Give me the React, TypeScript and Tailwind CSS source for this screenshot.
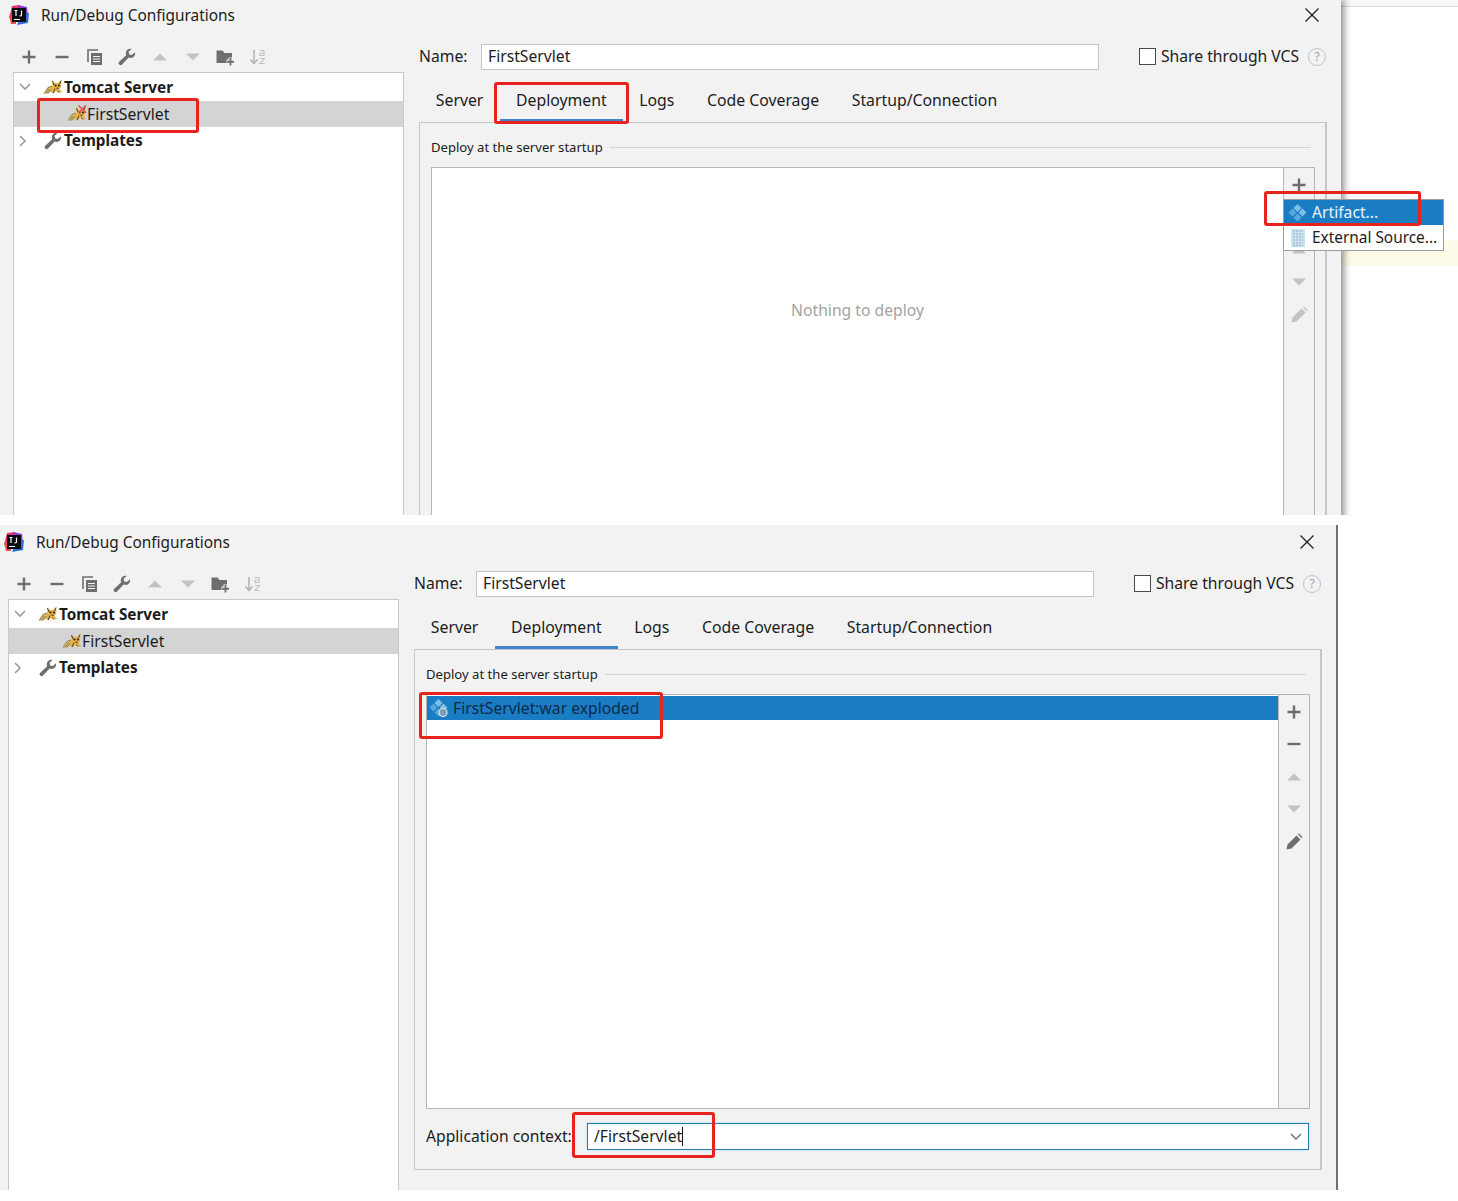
import React from 'react';

const font = { fontFamily: '"Noto Sans", "Open Sans", Arial, sans-serif' };

const IdeaLogo = () => (
  <svg width="22" height="22" viewBox="0 0 22 22">
    <path d="M4 2 L12 1 L10 10 L1 14 Z" fill="#e8316e" />
    <path d="M10 1 L19 3 L20 12 L12 10 Z" fill="#8a3fd0" />
    <path d="M1 12 L7 8 L8 20 L3 20 Z" fill="#ef4b4b" />
    <path d="M14 10 L21 9 L20 19 L9 21 Z" fill="#2e6fe0" />
    <rect x="4" y="4" width="14" height="14" fill="#0b0b12" />
    <rect x="6" y="15" width="6" height="1" fill="#ffffff" />
    <path d="M6.500 6.500h3M8 6.500v5.500M13.500 6.500v4.500q0 1-2 1" stroke="#ffffff" strokeWidth="1.200" fill="none" />
  </svg>
);

const TomcatIcon = ({ broken }: { broken?: boolean }) => (
  <svg width="20" height="18" viewBox="0 0 20 18" className="shrink-0">
    <path d="M1 15.500 L5 9.500 L9.500 7.500 L9 2.500 L12 5 L15 5 L18.500 2 L18 9 L16.500 11 L19.500 14 L15.500 14.500 L13.500 12.500 L10.500 15.500 L7.500 13.500 L5 15.500 Z" fill="#e3b34c" />
    <path d="M1 15.500 L5 9.500 L9 8 M3 15.500 L6.500 11 M5 15.500 L8 11.500" stroke="#85806c" strokeWidth="1" fill="none" />
    <path d="M9.500 3 L11 7 M18 2.500 L16.500 6 M10 15 L12 10.500 M14 12.500 L16 14.500" stroke="#57431c" strokeWidth="1" fill="none" />
    <circle cx="12.500" cy="7.500" r="1.100" fill="#2f2410" />
    <circle cx="16" cy="7.500" r="1.100" fill="#2f2410" />
    <path d="M13.500 10.200h2" stroke="#2f2410" strokeWidth="1" />
    {broken && <path d="M11.500 0.500 L19 8 M19 0.500 L11.500 8" stroke="#e2505a" strokeWidth="1.700" />}
  </svg>
);

const WrenchIcon = ({ size = 18 }: { size?: number }) => (
  <svg width={size} height={size} viewBox="0 0 18 18" className="shrink-0">
    <path d="M17 4.200 L13.800 7 L11.200 6.400 L10.600 3.800 L13.600 1 C11 0.200 7.800 1.800 7.800 5.200 C7.800 6 8 6.700 8.200 7.200 L1.200 13.800 C0.300 14.800 0.400 15.700 1.200 16.600 C2.200 17.500 3.200 17.400 4 16.600 L10.700 9.600 C11.400 9.900 12 10 12.700 10 C15.900 9.800 17.600 7 17 4.200 Z" fill="#6e6e6e" />
  </svg>
);

const PlusIcon = ({ color = '#6e6e6e' }: { color?: string }) => (
  <svg width="14" height="14" viewBox="0 0 14 14"><path d="M7 0.500v13M0.500 7h13" stroke={color} strokeWidth="2.400" /></svg>
);
const MinusIcon = ({ color = '#6e6e6e' }: { color?: string }) => (
  <svg width="14" height="14" viewBox="0 0 14 14"><path d="M0.500 7h13" stroke={color} strokeWidth="2.400" /></svg>
);
const UpIcon = () => (
  <svg width="14" height="8" viewBox="0 0 14 8"><path d="M7 0.500 L14 7.500 H0 Z" fill="#c3c3c3" /></svg>
);
const DownIcon = () => (
  <svg width="14" height="8" viewBox="0 0 14 8"><path d="M7 7.500 L14 0.500 H0 Z" fill="#c3c3c3" /></svg>
);
const CopyIcon = () => (
  <svg width="16" height="17" viewBox="0 0 16 17" fill="none">
    <path d="M1 13V1h10" stroke="#6e6e6e" strokeWidth="1.600" />
    <rect x="4" y="4" width="11" height="12" fill="#6e6e6e" />
    <path d="M6 7.500h7M6 10h7M6 12.500h7" stroke="#f2f2f2" strokeWidth="1.100" />
  </svg>
);
const FolderPlusIcon = () => (
  <svg width="19" height="17" viewBox="0 0 19 17">
    <path d="M0.500 1.500h6l2 2.500h7.500v10h-15.500z" fill="#6e6e6e" />
    <path d="M14.500 8.500v8M10.500 12.500h8" stroke="#f2f2f2" strokeWidth="4" />
    <path d="M14.500 9v7.500M11 12.750h7" stroke="#6e6e6e" strokeWidth="1.800" />
  </svg>
);
const SortIcon = () => (
  <svg width="18" height="18" viewBox="0 0 18 18" fill="none">
    <path d="M5 2v13M1.500 11.500 5 15.500l3.500-4" stroke="#b4b4b4" strokeWidth="1.600" />
    <path d="M11 2.500h4v5h-4v-2.300h4M11 10.500h4.500l-4.500 5h4.500" stroke="#c0c0c0" strokeWidth="1.100" />
  </svg>
);
const PencilIcon = ({ color }: { color: string }) => (
  <svg width="17" height="17" viewBox="0 0 17 17"><path d="M0.500 16.500 L1.500 11.500 L10.500 2.500 L14.500 6.500 L5.500 15.500 Z M11.800 1.200 L13 0.500 L16.500 4 L15.800 5.200 Z" fill={color} /></svg>
);
const ArtifactIcon = ({ badge }: { badge?: boolean }) => (
  <svg width="20" height="20" viewBox="0 0 20 20" className="shrink-0">
    <path d="M9.500 1l4 4-4 4-4-4z" fill="#7cc0e8" />
    <path d="M4.500 5.500l4 4-4 4-4-4z" fill="#58a8dc" />
    <path d="M14.500 5.500l4 4-4 4-4-4z" fill="#7cc0e8" />
    <path d="M9.500 10.500l4 4-4 4-4-4z" fill="#58a8dc" />
    {badge && <circle cx="14" cy="14.500" r="4" fill="#7f9db3" stroke="#dce8f0" strokeWidth="1.200" />}
  </svg>
);
const ExternalIcon = () => (
  <svg width="14" height="18" viewBox="0 0 14 18" className="shrink-0">
    <rect width="14" height="18" fill="#cfe3ee" />
    <path d="M2 2h10M2 5h10M2 8h10M2 11h10M2 14h10M2 16.500h10" stroke="#7fb3cf" strokeWidth="1" strokeDasharray="2 1" />
  </svg>
);

const RedBox = ({ className }: { className: string }) => (
  <div className={`absolute z-30 rounded-[3px] border-[3px] border-[#e8221f] ${className}`} />
);

const toolbarIcons = [
  <PlusIcon />,
  <MinusIcon />,
  <CopyIcon />,
  <WrenchIcon />,
  <UpIcon />,
  <DownIcon />,
  <FolderPlusIcon />,
  <SortIcon />,
];

const tabs = ['Server', 'Deployment', 'Logs', 'Code Coverage', 'Startup/Connection'];

const ConfigDialog = ({ deployed }: { deployed: boolean }) => {
  return (
    <div className={`flex h-full flex-col bg-[#f2f2f2] text-[15.700px] text-[#1c1c1c] ${deployed ? 'pt-[2px]' : ''}`}>
      <div className="flex h-[30px] shrink-0 items-center">
        <div className="ml-[8px] w-[33px]"><IdeaLogo /></div>
        <span className="translate-y-px text-[15.400px]">Run/Debug Configurations</span>
        <svg width="14" height="14" viewBox="0 0 14 14" className="ml-auto mr-[22px]">
          <path d="M0.500 0.500 L13.500 13.500 M13.500 0.500 L0.500 13.500" stroke="#222" strokeWidth="1.300" />
        </svg>
      </div>

      <div className="flex min-h-0 flex-1">
        {/* left: tree */}
        <div className="ml-[13px] flex w-[391px] shrink-0 flex-col pt-[14px]">
          <div className="mb-[2px] flex h-[26px] items-center">
            {toolbarIcons.map((icon, i) => (
              <div key={i} className="flex h-[26px] w-[32.700px] shrink-0 items-center justify-center">{icon}</div>
            ))}
          </div>
          <div className="flex-1 border border-b-0 border-[#c9c9c9] bg-white">
            <div className="flex h-[28px] items-center pl-[5px] text-[15.300px] font-bold">
              <svg width="12" height="8" viewBox="0 0 12 8" className="mr-[12px]"><path d="M1 1l5 5 5-5" stroke="#9a9a9a" strokeWidth="1.600" fill="none" /></svg>
              <TomcatIcon />
              <span className="ml-[1px]">Tomcat Server</span>
            </div>
            <div className="flex h-[26px] items-center bg-[#d4d4d4] pl-[53px]">
              <TomcatIcon broken={!deployed} />
              <span className="translate-y-px">FirstServlet</span>
            </div>
            <div className="flex h-[27px] items-center pl-[5px] text-[15.300px] font-bold">
              <svg width="8" height="12" viewBox="0 0 8 12" className="mr-[17px]"><path d="M1 1l5 5-5 5" stroke="#9a9a9a" strokeWidth="1.600" fill="none" /></svg>
              <WrenchIcon />
              <span className="ml-[2px]">Templates</span>
            </div>
          </div>
        </div>

        {/* right: form */}
        <div className="ml-[15px] flex w-[908px] shrink-0 flex-col pt-[14px]">
          <div className="flex h-[26px] shrink-0 items-center">
            <span className="-mt-px w-[62px]">Name:</span>
            <div className="h-[26px] w-[618px] border border-[#c4c4c4] bg-white pl-[6px] leading-[22px]">FirstServlet</div>
            <div className="ml-[40px] h-[17px] w-[17px] -translate-y-px border-[1.500px] border-[#4a4a4a] bg-white" />
            <span className="-mt-px ml-[5px]">Share through VCS</span>
            <div className="ml-[9px] flex h-[18px] w-[18px] items-center justify-center rounded-full border-[1.500px] border-[#b9c6d0] text-[12px] text-[#9aa5ad]">?</div>
          </div>

          <div className="mt-[14px] flex h-[38px] shrink-0 pl-[0.500px] text-[15.800px]">
            {tabs.map((t) => (
              <div
                key={t}
                className={`flex h-[38px] items-center whitespace-nowrap border-b-[3px] px-[16.300px] pb-px ${t === 'Deployment' ? 'border-[#4083c9]' : 'border-transparent'}`}
              >
                {t}
              </div>
            ))}
          </div>

          <div className="mb-[20px] flex-1 border border-r-2 border-[#c6c6c6] pl-[11px] pr-[10px] pt-[14px]">
            <div className="mb-[10px] flex h-[20px] items-center text-[13.100px]">
              <span className="translate-y-px">Deploy at the server startup</span>
              <div className="ml-[7px] mr-[4px] h-px flex-1 bg-[#d4d4d4]" />
            </div>
            <div className="flex h-[415px] border border-[#b5b5b5]">
              <div className="flex-1 bg-white">
                {deployed ? (
                  <div className="my-px flex h-[24px] items-center bg-[#1a7dc4] pl-[2px] text-[#0d2a47]">
                    <ArtifactIcon badge />
                    <span className="ml-[4px] translate-y-px">FirstServlet:war exploded</span>
                  </div>
                ) : (
                  <div className="pt-[131px] text-center text-[#a3a3a3]">Nothing to deploy</div>
                )}
              </div>
              <div className="flex w-[31px] shrink-0 flex-col items-center border-l border-[#b5b5b5] pt-[1px]">
                <div className="flex h-[32px] items-center justify-center"><PlusIcon /></div>
                <div className="flex h-[32px] items-center justify-center"><MinusIcon /></div>
                <div className="flex h-[33px] items-center justify-center"><UpIcon /></div>
                <div className="flex h-[31px] items-center justify-center"><DownIcon /></div>
                <div className="flex h-[34px] items-center justify-center"><PencilIcon color={deployed ? '#6e6e6e' : '#c3c3c3'} /></div>
              </div>
            </div>
            {deployed && (
              <div className="mt-[14px] flex h-[27px] items-center pr-px">
                <span className="w-[161px] shrink-0">Application context:</span>
                <div className="flex h-[27px] flex-1 items-center border border-[#2a7ab5] bg-white pl-[6px] shadow-[0_0_2px_#9fdcff]">
                  <span>/FirstServlet</span>
                  <div className="h-[19px] w-px bg-[#111]" />
                  <svg width="12" height="8" viewBox="0 0 12 8" className="ml-auto mr-[6px]"><path d="M1 1l5 5 5-5" stroke="#6e6e6e" strokeWidth="1.400" fill="none" /></svg>
                </div>
              </div>
            )}
          </div>
        </div>
      </div>
    </div>
  );
};

export default function App() {
  return (
    <div className="relative h-[1201px] w-[1458px] overflow-hidden bg-white" style={font}>
      {/* first screenshot, cut off at the bottom */}
      <div className="flex h-[515px] overflow-hidden">
        <div className="relative z-10 h-[700px] w-[1341px] shrink-0 shadow-[3px_0_7px_rgba(0,0,0,0.45)]">
          <ConfigDialog deployed={false} />
        </div>
        <div className="flex-1">
          <div className="h-[7px] border-b border-[#d9d9d9] bg-[#f7f7f7]" />
          <div className="mt-[233px] h-[26px] bg-[#fffbea]" />
        </div>
      </div>

      {/* second screenshot */}
      <div className="ml-[-5px] mt-[10px] h-[665px] w-[1343px] border-r-2 border-[#6f6f6f]">
        <ConfigDialog deployed />
      </div>

      {/* popup menu over the first dialog */}
      <div className="absolute left-[1283px] top-[199px] z-20 w-[161px] border border-[#9c9c9c] bg-white">
        <div className="flex h-[25px] items-center bg-[#1a7dc4] pl-[4px] text-[15.700px] text-[#e8f4fc]">
          <ArtifactIcon />
          <span className="ml-[4px]">Artifact...</span>
        </div>
        <div className="flex h-[25px] items-center pl-[7px] text-[15.400px] text-[#1c1c1c]">
          <ExternalIcon />
          <span className="ml-[7px] whitespace-nowrap">External Source...</span>
        </div>
      </div>

      {/* red annotations */}
      <RedBox className="left-[37px] top-[98px] h-[35px] w-[162px]" />
      <RedBox className="left-[494px] top-[82px] h-[42px] w-[135px]" />
      <RedBox className="left-[1264px] top-[191px] h-[35px] w-[157px]" />
      <RedBox className="left-[419px] top-[692px] h-[47px] w-[244px]" />
      <RedBox className="left-[572px] top-[1112px] h-[46px] w-[143px]" />
    </div>
  );
}
